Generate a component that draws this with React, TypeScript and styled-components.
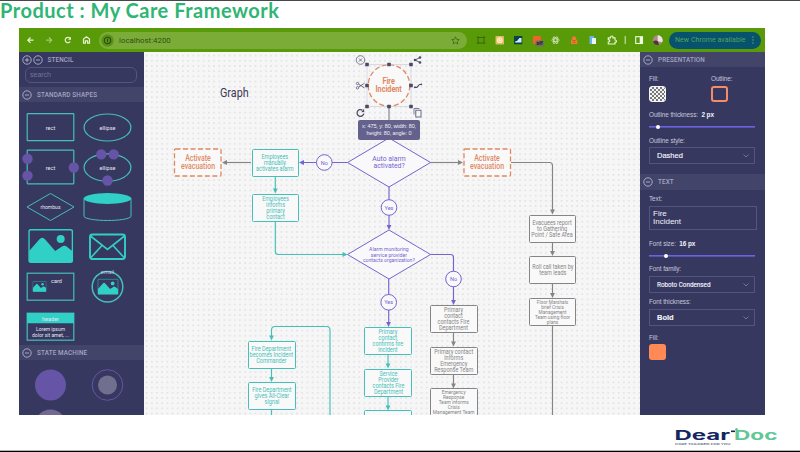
import React from "react";
import styled, { createGlobalStyle, css } from "styled-components";

const c = {
  panel: "#37385f",
  panelHead: "#434469",
  line: "#54557c",
  muted: "#a3a4c2",
  teal: "#31d0c6",
  tealSoft: "#45bfb7",
  purple: "#7464cf",
  violet: "#6654a6",
  orange: "#df8861",
  gray: "#858585",
  ink: "#4b4a67",
};

const Global = createGlobalStyle`
  * { box-sizing: border-box; }
  body { margin: 0; background: #fff; font-family: "Liberation Sans", Arial, sans-serif; }
`;

const Slide = styled.main`
  width: 800px;
  height: 452px;
  display: flex;
  flex-direction: column;
  overflow: hidden;
  background: #fff;
  border-top: 1px solid #4a474a;
  border-bottom: 1px solid #000;
`;

const Title = styled.h1`
  margin: 0;
  height: 27px;
  font: 700 20px/19px "Lato", sans-serif;
  letter-spacing: 0.5px;
  color: #2fb574;
  white-space: nowrap;
`;

const Browser = styled.section`
  width: 746px;
  height: 387px;
  margin-left: 19px;
  display: flex;
  flex-direction: column;
`;

const Toolbar = styled.header`
  height: 24px;
  flex: none;
  display: flex;
  align-items: center;
  background: #599a08;
`;

const NavIcons = styled.div`
  width: 80px;
  display: flex;
`;

const Address = styled.div`
  width: 368px;
  height: 17px;
  border-radius: 9px;
  display: flex;
  align-items: center;
  padding: 0 7px 0 2px;
  background: #7bac38;
  color: #2f4f14;
`;

const Url = styled.span`
  flex: 1;
  margin-left: 5px;
  font: 7.8px "Roboto", sans-serif;
  letter-spacing: 0.03px;
`;

const Extensions = styled.div`
  width: 202px;
  display: flex;
`;

const UpdateButton = styled.button`
  width: 92px;
  height: 17px;
  border: 0;
  border-radius: 9px;
  padding: 0 7px 0 6px;
  display: flex;
  align-items: center;
  justify-content: space-between;
  background: #07526c;
  color: #53a55f;
  font: 7px "Roboto", sans-serif;
  letter-spacing: 0.05px;
  white-space: nowrap;
`;

const Workspace = styled.div`
  flex: 1;
  min-height: 0;
  display: flex;
`;

const Panel = styled.aside`
  width: 125px;
  flex: none;
  overflow: hidden;
  background: ${c.panel};
`;

const PanelHead = styled.div<{ $h?: number; $plain?: boolean }>`
  height: ${(p) => p.$h ?? 15}px;
  display: flex;
  align-items: center;
  padding-left: 3px;
  gap: 4.5px;
  background: ${(p) => (p.$plain ? "transparent" : c.panelHead)};
  color: ${c.muted};
  font: 500 6.3px "Roboto", sans-serif;
  letter-spacing: 0.16px;
  white-space: nowrap;
`;

const Toggles = styled.span`
  display: flex;
`;

const Search = styled.div`
  height: 16px;
  width: 112px;
  margin: 0 0 4px 6px;
  padding-left: 4px;
  border: 1px solid ${c.line};
  border-radius: 6px;
  font-size: 7px;
  line-height: 14px;
  color: #74759a;
`;

const Shapes = styled.div<{ $rows: string; $top: number }>`
  display: grid;
  grid-template-columns: 57px 57px;
  grid-template-rows: ${(p) => p.$rows};
  padding: ${(p) => p.$top}px 0 0 2.5px;
`;

const ShapeSvg = styled.svg`
  width: 57px;
  height: 40px;
  overflow: visible;
  fill: none;
  stroke: ${c.tealSoft};
  stroke-width: 1.2;
  text {
    fill: #e6e6f2;
    stroke: none;
    font: 5.5px "Roboto", sans-serif;
    text-anchor: middle;
  }
`;

const Shape = ({ children }: { children: React.ReactNode }) => (
  <ShapeSvg viewBox="-28.5 -20 57 40">{children}</ShapeSvg>
);

const ToggleIcon = ({ plus }: { plus?: boolean }) => (
  <svg width="10.5" height="10" viewBox="0 0 10.5 10" fill="none" stroke="#b3b4cf" strokeWidth="0.9">
    <circle cx="5" cy="5" r="4.2" />
    <path d={plus ? "M2.8 5h4.4M5 2.8v4.4" : "M3 5h4"} />
  </svg>
);

const Picture = ({ x, y, w, h }: { x: number; y: number; w: number; h: number }) => (
  <svg x={x} y={y} width={w} height={h} viewBox="0 0 45 34" preserveAspectRatio="none" stroke="none" fill={c.teal}>
    <rect x="0.75" y="0.75" width="43.5" height="32.5" rx="2" fill="none" stroke={c.teal} strokeWidth="1.5" />
    <circle cx="32.5" cy="10" r="4" />
    <path d="M1 22L11 10.500Q14 7 17 10.500L27 22L33 18Q36.500 15.500 39 18L44 22V33H1Z" />
  </svg>
);

/* ---- canvas ---- */

const Canvas = styled.div`
  position: relative;
  flex: 1;
  overflow: hidden;
  background: radial-gradient(circle at 50% 50%, #dfdfe2 0.5px, transparent 0.95px) 0 1px / 5.2px 5.2px #f6f6f7;
`;

const Edges = styled.svg`
  position: absolute;
  inset: 0;
  width: 496px;
  height: 363px;
  fill: none;
  stroke-width: 1.15;
`;

type Tone = "teal" | "gray" | "orange" | "purple";
const tones: Record<Tone, string> = {
  teal: c.tealSoft,
  gray: c.gray,
  orange: c.orange,
  purple: c.purple,
};

const Node = styled.div<{ $x: number; $y: number; $tone: Tone; $size: number; $lh: number; $bare?: boolean }>`
  position: absolute;
  left: ${(p) => p.$x - 144}px;
  top: ${(p) => p.$y - 52}px;
  width: 47.5px;
  height: 28px;
  display: flex;
  align-items: center;
  justify-content: center;
  color: ${(p) => tones[p.$tone]};
  ${(p) =>
    !p.$bare &&
    p.$tone !== "orange" &&
    css`
      border: 1.2px solid ${tones[p.$tone]};
      border-radius: 1.5px;
      background: #f9f9fa;
    `}
  font: 400 ${(p) => p.$size}px/${(p) => p.$lh}px "Roboto", sans-serif;
  text-align: center;
  white-space: pre;
`;

const Condensed = styled.span<{ $s: number; $weight?: number }>`
  display: block;
  transform: scaleX(${(p) => p.$s});
  font-weight: ${(p) => p.$weight ?? 400};
`;

const CanvasTitle = styled.div`
  position: absolute;
  left: 75.5px;
  top: 32px;
  font: 13.5px/16px "Roboto", sans-serif;
  color: #3c3b55;
  transform: scaleX(0.8);
  transform-origin: left;
`;

const Tooltip = styled.div`
  position: absolute;
  left: 214px;
  top: 68px;
  width: 62px;
  height: 20px;
  border-radius: 2px;
  padding-top: 3px;
  background: #64628c;
  color: #f0f0f8;
  font: 5.5px/7px "Liberation Sans", sans-serif;
  letter-spacing: -0.1px;
  text-align: center;
  white-space: pre;
`;

interface NodeSpec {
  x: number;
  y: number;
  tone: Tone;
  text: string;
  size?: number;
  lh?: number;
  scale?: number;
  bare?: boolean;
  weight?: number;
}

const nodes: NodeSpec[] = [
  { x: 174, y: 148.5, tone: "orange", text: "Activate\nevacuation", size: 8.2, lh: 7.4, scale: 0.85, weight: 500 },
  { x: 463.5, y: 148.5, tone: "orange", text: "Activate\nevacuation", size: 8.2, lh: 7.4, scale: 0.85, weight: 500 },
  { x: 365.2, y: 71, tone: "orange", text: "Fire\nIncident", size: 8.6, lh: 8, scale: 0.84, bare: true, weight: 700 },
  { x: 365.2, y: 147.8, tone: "purple", text: "Auto alarm\nactivated?", size: 7.8, lh: 7.3, scale: 0.88, bare: true },
  { x: 365.2, y: 240.5, tone: "purple", text: "Alarm monitoring\nservice provider\ncontacts organization?", size: 6.1, lh: 5.6, scale: 0.84, bare: true },
  { x: 251.5, y: 148.5, tone: "teal", text: "Employees\nmanually\nactivates alarm" },
  { x: 251.5, y: 193.5, tone: "teal", text: "Employees\ninforms\nprimary\ncontact" },
  { x: 248, y: 340.7, tone: "teal", text: "Fire Department\nbecomes Incident\nCommander" },
  { x: 248, y: 382.2, tone: "teal", text: "Fire Department\ngives All-Clear\nsignal" },
  { x: 364.3, y: 327, tone: "teal", text: "Primary\ncontact\nconfirms fire\nincident" },
  { x: 364.3, y: 368.7, tone: "teal", text: "Service\nProvider\ncontacts Fire\nDepartment" },
  { x: 364.3, y: 410.3, tone: "teal", text: "" },
  { x: 430, y: 305, tone: "gray", text: "Primary\ncontact\ncontacts Fire\nDepartment" },
  { x: 430, y: 346.7, tone: "gray", text: "Primary contact\ninforms\nEmergency\nResponse Team" },
  { x: 430, y: 388.3, tone: "gray", text: "Emergency\nResponse\nTeam informs\nCrisis\nManagement Team", size: 5.5, lh: 5.1, scale: 0.88 },
  { x: 528.8, y: 214.5, tone: "gray", text: "Evacuees report\nto Gathering\nPoint / Safe Area" },
  { x: 528.8, y: 256.2, tone: "gray", text: "Roll call taken by\nteam leads" },
  { x: 528.8, y: 298, tone: "gray", text: "Floor Marshals\nbrief Crisis\nManagement\nTeam using floor\nplans", size: 5.5, lh: 5, scale: 0.86 },
];

const edges: { d: string; tone: Tone; tip?: [number, number, "d" | "l" | "r"] }[] = [
  { d: "M251 162.500H226", tone: "gray", tip: [222, 162.5, "l"] },
  { d: "M430 162.500H460", tone: "gray", tip: [463, 162.5, "r"] },
  { d: "M511 162.500H549.500Q552.500 162.500 552.500 165.500V211", tone: "gray", tip: [552.5, 214.5, "d"] },
  { d: "M552.500 242V253", tone: "gray", tip: [552.5, 256, "d"] },
  { d: "M552.500 284V295", tone: "gray", tip: [552.5, 298, "d"] },
  { d: "M552.500 326V415", tone: "gray" },
  { d: "M389 107V138", tone: "gray" },
  { d: "M348 162.500H303", tone: "purple", tip: [299, 162.5, "l"] },
  { d: "M389 187V226", tone: "purple", tip: [389, 230, "d"] },
  { d: "M388.700 279V323", tone: "purple", tip: [388.5, 327, "d"] },
  { d: "M430 254.500H450.500Q453.500 254.500 453.500 257.500V301", tone: "purple", tip: [453.5, 305, "d"] },
  { d: "M275.300 176V190", tone: "teal", tip: [275.3, 193.5, "d"] },
  { d: "M275.300 221V251.500Q275.300 254.500 278.300 254.500H343", tone: "teal", tip: [347.5, 254.5, "r"] },
  { d: "M330 416V330Q330 326.500 326.500 326.500H275Q271.500 326.500 271.500 330V337", tone: "teal", tip: [271.5, 340.5, "d"] },
  { d: "M271.500 368V379", tone: "teal", tip: [271.5, 382, "d"] },
  { d: "M271.500 410V416", tone: "teal" },
  { d: "M388 354V365", tone: "teal", tip: [388, 368.5, "d"] },
  { d: "M388 396V407", tone: "teal", tip: [388, 410.5, "d"] },
  { d: "M453.500 332V343", tone: "gray", tip: [453.5, 346.5, "d"] },
  { d: "M453.500 374V385", tone: "gray", tip: [453.5, 388.5, "d"] },
];

const tipAngle = { d: 90, l: 180, r: 0 };

const badges: [number, number, string][] = [
  [324.3, 162.5, "No"],
  [389, 207.5, "Yes"],
  [388.7, 302.3, "Yes"],
  [453.5, 279, "No"],
];

const handles: [number, number][] = [
  [367, 64.5], [389, 64.5], [411, 64.5], [367, 85.5], [411, 85.5], [367, 106.5], [389, 106.5], [411, 106.5],
];

const BadgeText = styled.text`
  font: 5.6px "Roboto", sans-serif;
  text-anchor: middle;
  fill: ${c.purple};
`;

const Diagram = () => (
  <>
    <Edges viewBox="144 52 496 363">
      {edges.map((e) => (
        <g key={e.d} stroke={tones[e.tone]}>
          <path d={e.d} />
          {e.tip && (
            <path
              d="M0 0L-5 -2.400V2.400Z"
              fill={tones[e.tone]}
              stroke="none"
              transform={`translate(${e.tip[0]} ${e.tip[1]}) rotate(${tipAngle[e.tip[2]]})`}
            />
          )}
        </g>
      ))}
      <g stroke={c.purple} fill="#f9f9fb" strokeWidth="1">
        <path d="M347.500 162.500L389 138L430.500 162.500L389 187Z" />
        <path d="M347.500 254.500L389 230L430.500 254.500L389 279Z" />
        {badges.map(([x, y]) => (
          <circle key={`${x}-${y}`} cx={x} cy={y} r="7.8" />
        ))}
      </g>
      {badges.map(([x, y, t]) => (
        <BadgeText key={`${x}-${y}`} x={x} y={y + 2}>{t}</BadgeText>
      ))}
      <g stroke={c.orange} fill="#f9f9fa" strokeWidth="1.3" strokeDasharray="5 2.500">
        <rect x="174.500" y="149" width="46.500" height="27" rx="1" />
        <rect x="464" y="149" width="46.500" height="27" rx="1" />
        <circle cx="389" cy="85.500" r="20.800" />
      </g>
      <rect x="367" y="64.500" width="44" height="42" stroke="#c9c9dc" strokeWidth="0.6" />
      {handles.map(([x, y]) => (
        <rect key={`${x}-${y}`} x={x - 1.8} y={y - 1.8} width="3.600" height="3.600" rx="0.600" fill={c.ink} />
      ))}
      <g stroke={c.ink} strokeWidth="0.9">
        <circle cx="360.500" cy="60" r="4.300" strokeWidth="0.7" />
        <path d="M358.900 58.400l3.200 3.200m0 -3.200l-3.200 3.200" strokeWidth="0.7" />
        <path d="M420 57.500L415 60L420 62.500" />
        <g fill={c.ink} stroke="none">
          <circle cx="415" cy="60" r="1.300" />
          <circle cx="420" cy="57.500" r="1.300" />
          <circle cx="420" cy="62.500" r="1.300" />
        </g>
        <circle cx="357.500" cy="83.500" r="1.200" strokeWidth="0.7" />
        <circle cx="357.500" cy="87.800" r="1.200" strokeWidth="0.7" />
        <path d="M358.600 84.200L364.500 88M358.600 87.100L364.500 83.200" strokeWidth="0.8" />
        <path d="M414.500 87.300H416.500C418.500 87.300 417.800 84.500 420 84.500H421.500" strokeWidth="1.2" />
        <circle cx="414.800" cy="87.300" r="0.900" fill={c.ink} stroke="none" />
        <circle cx="421.300" cy="84.300" r="0.900" fill={c.ink} stroke="none" />
        <path d="M363.800 113.700A3.400 3.400 0 1 1 362.300 110.100" strokeWidth="1.3" />
        <path d="M361.200 112.200l3.100 -0.300l-0.300 -3.100Z" fill={c.ink} stroke="none" />
        <path d="M414 114.500V108.500H419.500" strokeWidth="0.7" />
        <rect x="415.800" y="110.200" width="5.200" height="6.800" strokeWidth="0.8" />
      </g>
    </Edges>
    {nodes.map((n) => (
      <Node key={`${n.x}-${n.y}`} $x={n.x} $y={n.y} $tone={n.tone} $size={n.size ?? 6.4} $lh={n.lh ?? 6} $bare={n.bare}>
        <Condensed $s={n.scale ?? 0.86} $weight={n.weight}>{n.text}</Condensed>
      </Node>
    ))}
    <CanvasTitle>Graph</CanvasTitle>
    <Tooltip>{"x: 475, y: 80, width: 80,\nheight: 80, angle: 0"}</Tooltip>
  </>
);

/* ---- inspector ---- */

const Form = styled.div<{ $pad: string }>`
  padding: ${(p) => p.$pad};
`;

const Label = styled.div<{ $mt?: number }>`
  margin-top: ${(p) => p.$mt ?? 0}px;
  font-size: 6.4px;
  line-height: 8px;
  letter-spacing: -0.08px;
  color: #c6c7dc;
  white-space: pre;
  b {
    color: #f2f2fa;
  }
`;

const Swatches = styled.div`
  display: grid;
  grid-template-columns: 62px auto;
`;

const Swatch = styled.div<{ $kind: "none" | "outline" | "solid"; $mt?: number }>`
  width: 16.5px;
  height: 16px;
  margin-top: ${(p) => p.$mt ?? 3}px;
  border-radius: 3px;
  ${(p) =>
    p.$kind === "none"
      ? css`
          border: 1px solid #f4f4f4;
          background: conic-gradient(#777 25%, #f4f4f4 0 50%, #777 0 75%, #f4f4f4 0) 0 0 / 4px 4px;
        `
      : p.$kind === "outline"
        ? css`
            border: 2px solid #f58c69;
          `
        : css`
            background: #ff8a55;
          `}
`;

const Slider = styled.div<{ $at: number; $mt: number }>`
  width: 106px;
  height: 5px;
  margin-top: ${(p) => p.$mt}px;
  display: flex;
  align-items: center;
  background: linear-gradient(#6c63e0, #6c63e0) center / 100% 1.6px no-repeat;
  &::after {
    content: "";
    width: 4px;
    height: 4px;
    margin-left: ${(p) => p.$at - 2}px;
    border-radius: 50%;
    background: #fff;
  }
`;

const Select = styled.div<{ $mt: number; $narrow?: boolean; $bold?: boolean }>`
  width: 106px;
  height: 17px;
  margin-top: ${(p) => p.$mt}px;
  padding: 0 5px 0 7px;
  border: 1px solid ${c.line};
  display: flex;
  align-items: center;
  justify-content: space-between;
  color: #f2f2fa;
  font: ${(p) => (p.$bold ? 700 : 400)} 7.5px ${(p) => (p.$narrow ? '"Roboto"' : '"Liberation Sans"')}, sans-serif;
  span {
    transform: scaleX(${(p) => (p.$narrow ? 0.84 : 1)});
    transform-origin: left;
    -webkit-text-stroke: 0.15px;
  }
`;

const TextArea = styled.div`
  width: 108px;
  height: 24px;
  margin-top: 3px;
  padding: 3px 3px 0;
  border: 1px solid ${c.line};
  color: #f2f2fa;
  font-size: 8px;
  line-height: 8px;
  white-space: pre;
`;

const Chevron = () => (
  <svg width="6" height="4" viewBox="0 0 6 4" fill="none" stroke="#8384a0" strokeWidth="0.8">
    <path d="M0.500 0.500L3 3L5.500 0.500" />
  </svg>
);

/* ---- toolbar drawings ---- */

const NavDrawing = () => (
  <svg width="80" height="24" viewBox="19 28 80 24" fill="none" stroke="#e6f3d2" strokeWidth="1.2">
    <path d="M33.500 40.200H28M30.500 37.500L27.800 40.200L30.500 42.900" />
    <path d="M46 40.200H51.500M49 37.500L51.700 40.200L49 42.900" stroke="#a2ca6c" />
    <path d="M70.200 41.500A2.700 2.700 0 1 1 69.900 38.200" />
    <path d="M71 36.800V39.800H68Z" fill="#e6f3d2" stroke="none" />
    <path d="M83.500 43.200V39L86.500 36.800L89.500 39V43.200H87.600V40.800H85.400V43.200Z" />
  </svg>
);

const ExtensionDrawing = () => (
  <svg width="202" height="24" viewBox="467 28 202 24" fill="none">
    <path d="M478 37.500h6v5.500h-6zM476.800 37h2M476.800 43.300h2M483.200 37h2M483.200 43.300h2" stroke="#37630c" strokeWidth="0.9" />
    <rect x="495.500" y="36" width="8.500" height="8.500" rx="0.700" fill="#e0b963" />
    <circle cx="499.700" cy="40.200" r="2.900" fill="#fff3cc" />
    <circle cx="499.700" cy="40.200" r="1.600" stroke="#e0b963" strokeWidth="0.6" />
    <rect x="514" y="36" width="8.300" height="8.300" fill="#0b4250" />
    <path d="M515 42.500q0-2 2-1.500l2.500-3h2v4.500z" fill="#d8eef0" />
    <rect x="533" y="36" width="8" height="8" rx="1" fill="#ee6428" />
    <rect x="535.500" y="40.500" width="8.500" height="6" rx="1.500" fill="#716f69" />
    <text x="539.700" y="45.300" fill="#191919" fontFamily="Roboto, sans-serif" fontSize="4.800" fontWeight="700" textAnchor="middle">off</text>
    <g stroke="#cfe4b6" strokeWidth="0.8">
      <ellipse cx="555.500" cy="40.200" rx="3.800" ry="1.500" />
      <ellipse cx="555.500" cy="40.200" rx="3.800" ry="1.500" transform="rotate(60 555.500 40.200)" />
      <ellipse cx="555.500" cy="40.200" rx="3.800" ry="1.500" transform="rotate(120 555.500 40.200)" />
    </g>
    <path d="M572.500 36.500h3l.8 3 1 1v3.500h-6.300v-3.500l1-1z" fill="#f07a35" />
    <path d="M572.500 40.500h3.200M572.500 42.200h3.200" stroke="#b34c17" strokeWidth="0.6" />
    <rect x="589.500" y="36" width="4.500" height="8" fill="#6fb1ea" />
    <rect x="592" y="38" width="4" height="6" fill="#e9f3fb" />
    <path d="M608.300 37.800H610.500Q610.500 36 611.800 36T613 37.800H615V40Q616.500 40 616.500 41.200T615 42.300V44H608.300V42Q609.800 41.800 609.800 40.800T608.300 39.700Z" stroke="#e6f3d2" strokeWidth="1.200" />
    <path d="M625.200 36V44" stroke="#d9ebc0" />
    <rect x="635.700" y="36.700" width="6.800" height="6.800" stroke="#eef7df" strokeWidth="1.100" />
    <path d="M639.700 37h3v6.300h-3z" fill="#eef7df" />
    <circle cx="657.700" cy="40.200" r="5" fill="#a98c83" />
    <path d="M657.700 35.200a5 5 0 0 1 4.500 7l-4.500-1z" fill="#ece6e1" />
    <path d="M653 41.500q3-2 5 0l1 3.400q-4.500 1-6-3.400z" fill="#57313a" />
  </svg>
);

const Footer = styled.footer`
  flex: 1;
  display: flex;
  justify-content: flex-end;
  padding: 12px 20px 0 0;
  border-bottom: 1px solid #b5b5b5;
`;

const Logo = () => (
  <svg width="106" height="21" viewBox="674 427 106 21" fontFamily="Inter, sans-serif">
    <text x="674.500" y="440" fontSize="13" fontWeight="700" fill="#13265f" textLength="55.500" lengthAdjust="spacingAndGlyphs">Dear</text>
    <text x="734" y="440" fontSize="13" fontWeight="700" fill="#62c797" textLength="43.500" lengthAdjust="spacingAndGlyphs">Doc</text>
    <path d="M731 431.300h4" stroke="#13265f" strokeWidth="1.600" />
    <path d="M735 429.300h3M736.500 428v3" stroke="#62c797" strokeWidth="1.200" />
    <text x="675" y="445" fontSize="2.500" fontWeight="500" fill="#39486f" textLength="55.500" lengthAdjust="spacingAndGlyphs">CARE TAILORED FOR YOU</text>
  </svg>
);

export default function App() {
  return (
    <Slide>
      <Global />
      <Title>Product : My Care Framework</Title>
      <Browser>
        <Toolbar>
          <NavIcons><NavDrawing /></NavIcons>
          <Address>
            <svg width="13" height="13" viewBox="0 0 13 13" fill="none" stroke="#284d0b">
              <circle cx="6.500" cy="6.500" r="6.200" fill="#5b9119" stroke="none" />
              <circle cx="6.500" cy="6.500" r="3.200" strokeWidth="1.100" />
              <path d="M6.500 4.800v3.400" />
            </svg>
            <Url>localhost:4200</Url>
            <svg width="9" height="9" viewBox="0 0 9 9" fill="none" stroke="#3d681a" strokeWidth="0.8">
              <path d="M4.500 0.800L5.600 3.300L8.300 3.600L6.300 5.400L6.900 8L4.500 6.600L2.100 8L2.700 5.400L0.700 3.600L3.400 3.300Z" />
            </svg>
          </Address>
          <Extensions><ExtensionDrawing /></Extensions>
          <UpdateButton>
            New Chrome available
            <svg width="2" height="8" viewBox="0 0 2 8" fill="#62b56c">
              <circle cx="1" cy="1" r="0.700" /><circle cx="1" cy="4" r="0.700" /><circle cx="1" cy="7" r="0.700" />
            </svg>
          </UpdateButton>
        </Toolbar>
        <Workspace>
          <Panel>
            <PanelHead $plain>
              <Toggles><ToggleIcon plus /><ToggleIcon /></Toggles>
              STENCIL
            </PanelHead>
            <Search>search</Search>
            <PanelHead><ToggleIcon />STANDARD SHAPES</PanelHead>
            <Shapes $rows="repeat(5, 40px) 38.5px" $top={4.5}>
              <Shape><rect x="-23.300" y="-13.300" width="46.600" height="27" rx="0.500" /><text y="2.500">rect</text></Shape>
              <Shape><ellipse cx="0" cy="0.500" rx="23.400" ry="13.500" /><text y="2.500">ellipse</text></Shape>
              <Shape>
                <rect x="-23.300" y="-16.800" width="46.600" height="33.600" rx="0.500" />
                <g fill={c.violet} stroke="none"><circle cx="-23" cy="-8.200" r="5.200" /><circle cx="-23" cy="8.600" r="5.200" /><circle cx="23.300" cy="0.500" r="5.200" /></g>
                <text y="2.500">rect</text>
              </Shape>
              <Shape>
                <ellipse cx="0" cy="0.500" rx="23.400" ry="13.700" />
                <g fill={c.violet} stroke="none"><circle cx="-6.200" cy="-12.600" r="5.200" /><circle cx="6.200" cy="-12.600" r="5.200" /><circle cx="0" cy="13.500" r="5.200" /></g>
                <text y="2.500">ellipse</text>
              </Shape>
              <Shape><path d="M-23.500 0L0 -13.500L23.500 0L0 13.500Z" strokeWidth="1" /><text y="2.200" textLength="20" lengthAdjust="spacingAndGlyphs">rhombus</text></Shape>
              <Shape>
                <path d="M-23.500 -8.500V9.500C-20 14.800 20 14.800 23.500 9.500V-8.500" strokeWidth="1" />
                <ellipse cx="0" cy="-8.500" rx="23.800" ry="5.400" fill={c.teal} stroke="none" />
              </Shape>
              <Shape><Picture x={-22.3} y={-18} w={45} h={34} /></Shape>
              <Shape>
                <g stroke={c.teal} strokeWidth="1.9">
                  <rect x="-17.500" y="-12.500" width="35" height="24.500" rx="2.500" />
                  <path d="M-17 -11L0 2.500L17 -11M-17 11L-5.500 -1.500M17 11L5.500 -1.500" strokeWidth="1.600" />
                </g>
              </Shape>
              <Shape>
                <rect x="-23.300" y="-13.800" width="46.600" height="27" />
                <Picture x={-18} y={-6} w={14} h={11} />
                <text x="6" y="-4">card</text>
              </Shape>
              <Shape>
                <circle cx="0" cy="-0.300" r="15.300" strokeWidth="1.500" />
                <Picture x={-10} y={-8.3} w={21} h={16} />
                <text y="-13.500" opacity="0.700">email</text>
              </Shape>
              <Shape>
                <rect x="-23.300" y="-13.800" width="46.600" height="27" />
                <path d="M-23.500 -14H23.500V-3.800H-23.500Z" fill={c.teal} stroke="none" />
                <text y="-6.300">header</text>
                <text y="4.200" textLength="29" lengthAdjust="spacingAndGlyphs">Lorem ipsum</text>
                <text y="9.800" textLength="37" lengthAdjust="spacingAndGlyphs">dolor sit amet, ...</text>
              </Shape>
            </Shapes>
            <PanelHead><ToggleIcon />STATE MACHINE</PanelHead>
            <Shapes $rows="40px 40px" $top={5}>
              <Shape><circle r="15.500" fill={c.violet} stroke="none" /></Shape>
              <Shape><circle r="15.300" stroke={c.violet} strokeWidth="1" /><circle r="9.500" fill="#716f90" stroke="none" /></Shape>
              <Shape><circle r="15.500" fill="#716a93" stroke="none" /></Shape>
            </Shapes>
          </Panel>
          <Canvas><Diagram /></Canvas>
          <Panel>
            <PanelHead $h={15}><ToggleIcon />PRESENTATION</PanelHead>
            <Form $pad="8px 0 10px 9px">
              <Swatches>
                <div><Label>Fill:</Label><Swatch $kind="none" /></div>
                <div><Label>Outline:</Label><Swatch $kind="outline" /></div>
              </Swatches>
              <Label $mt={9}>Outline thickness:  <b>2 px</b></Label>
              <Slider $mt={5} $at={9} />
              <Label $mt={8}>Outline style:</Label>
              <Select $mt={2}><span>Dashed</span><Chevron /></Select>
            </Form>
            <PanelHead $h={16}><ToggleIcon />TEXT</PanelHead>
            <Form $pad="5px 0 0 9px">
              <Label>Text:</Label>
              <TextArea>{"Fire\nIncident"}</TextArea>
              <Label $mt={10}>Font size:  <b>16 px</b></Label>
              <Slider $mt={5} $at={17} />
              <Label $mt={7}>Font family:</Label>
              <Select $mt={3} $narrow><span>Roboto Condensed</span><Chevron /></Select>
              <Label $mt={5}>Font thickness:</Label>
              <Select $mt={3} $bold><span>Bold</span><Chevron /></Select>
              <Label $mt={8}>Fill:</Label>
              <Swatch $kind="solid" $mt={2} />
            </Form>
          </Panel>
        </Workspace>
      </Browser>
      <Footer><Logo /></Footer>
    </Slide>
  );
}
